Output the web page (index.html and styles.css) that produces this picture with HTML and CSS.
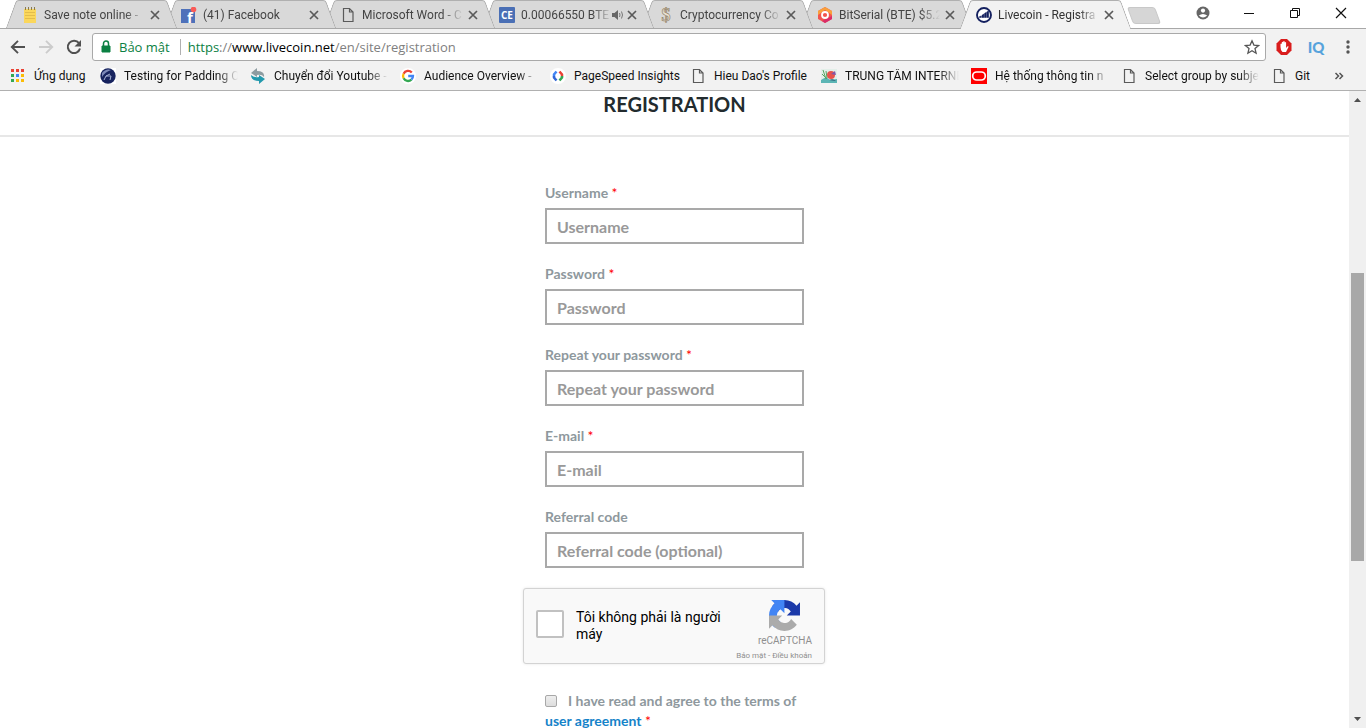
FILE: index.html
```html
<!DOCTYPE html>
<html lang="vi">
<head>
<meta charset="utf-8">
<title>Livecoin - Registration</title>
<link rel="stylesheet" href="styles.css">
</head>
<body>
<svg class="sprite" aria-hidden="true">
  <symbol id="close" viewBox="0 0 16 16"><path d="M4 4l8 8M12 4l-8 8" stroke="#5a5a5a" stroke-width="1.7" fill="none"/></symbol>
  <symbol id="page" viewBox="0 0 16 16"><path d="M3.5 1.5h6l3.500 3.500v9.500h-9.500zM9.500 1.500v3.500h3.500" stroke="#5a5a5a" stroke-width="1.200" fill="none"/></symbol>
</svg>

<header class="browser">
  <div class="titlebar">
    <nav class="tabs" aria-label="Tabs">
      <div class="tab tab-1">
        <svg class="icon" viewBox="0 0 16 16"><path d="M2 2h12v14H2z" fill="#fbd75b"/><path d="M3.500 0v3M6.500 0v3M9.500 0v3M12.500 0v3" stroke="#8a7b4c"/><path d="M3 5.500h10M3 8.500h10M3 11.500h10" stroke="#e3bd4c"/></svg>
        <span class="tab-title">Save note online -</span>
        <button class="tab-close" aria-label="Close"><svg class="icon"><use href="#close"/></svg></button>
      </div>
      <div class="tab tab-2">
        <svg class="icon" viewBox="0 0 16 16"><path d="M0 2h14v14H0z" fill="#4e71ba"/><text x="6" y="16" class="glyph-f">f</text><circle cx="12.500" cy="2.500" r="2.800" fill="#fa5b57"/></svg>
        <span class="tab-title">(41) Facebook</span>
        <button class="tab-close" aria-label="Close"><svg class="icon"><use href="#close"/></svg></button>
      </div>
      <div class="tab tab-3">
        <svg class="icon"><use href="#page"/></svg>
        <span class="tab-title">Microsoft Word - C</span>
        <button class="tab-close" aria-label="Close"><svg class="icon"><use href="#close"/></svg></button>
      </div>
      <div class="tab tab-4">
        <svg class="icon" viewBox="0 0 16 16"><rect width="16" height="16" rx="1" fill="#4a6fb5"/><text x="8" y="12" class="glyph-ce">CE</text></svg>
        <span class="tab-title tab-title-tight">0.00066550 BTE</span>
        <svg class="audio" viewBox="0 0 12 12"><path d="M0 4h2.500L6 1v10L2.500 8H0z" fill="#666"/><path d="M7.500 4q1 2 0 4M9.500 2.500q2 3.500 0 7" stroke="#777" fill="none"/></svg>
        <button class="tab-close" aria-label="Close"><svg class="icon"><use href="#close"/></svg></button>
      </div>
      <div class="tab tab-5">
        <svg class="icon" viewBox="0 0 16 16"><text x="8" y="14" class="glyph-dollar">$</text></svg>
        <span class="tab-title">Cryptocurrency Co</span>
        <button class="tab-close" aria-label="Close"><svg class="icon"><use href="#close"/></svg></button>
      </div>
      <div class="tab tab-6">
        <svg class="icon" viewBox="0 0 16 16"><path d="M8 0l7 4v8l-7 4-7-4V4z" fill="#f2554f"/><path d="M8 0l7 4v4L8 3 1 8V4z" fill="#f9a03c"/><path d="M15 9v3l-7 4-3-2z" fill="#d92d6b"/><circle cx="8" cy="8" r="3" fill="none" stroke="#fff" stroke-width="1.800"/></svg>
        <span class="tab-title">BitSerial (BTE) $5.2</span>
        <button class="tab-close" aria-label="Close"><svg class="icon"><use href="#close"/></svg></button>
      </div>
      <div class="tab tab-7 tab-active">
        <svg class="icon" viewBox="0 0 16 16"><circle cx="8" cy="8" r="7" fill="#fff" stroke="#14205f" stroke-width="1.900"/><path d="M3.500 10.500h1.800v-1.500l-1.800.6zM6 10.500h1.900V7L6 8.200zM8.500 10.500h1.900V5.200L8.500 6.400zM11 10.500h1.700V4L11 4.800z" fill="#14205f" stroke="#14205f" stroke-width=".5"/></svg>
        <span class="tab-title">Livecoin - Registra</span>
        <button class="tab-close" aria-label="Close"><svg class="icon"><use href="#close"/></svg></button>
      </div>
      <button class="new-tab" aria-label="New tab"></button>
    </nav>
    <div class="window-controls">
      <button aria-label="Profile"><svg class="icon" viewBox="0 0 16 16"><circle cx="8" cy="8" r="6.500" fill="#666"/><circle cx="8" cy="5.600" r="2.100" fill="#fff"/><path d="M3.800 10.600q4.200-3 8.400 0Q8 14.500 3.800 10.600z" fill="#fff"/></svg></button>
      <button aria-label="Minimize"><svg class="icon" viewBox="0 0 16 16"><path d="M3 8.500h10" stroke="#111"/></svg></button>
      <button aria-label="Restore"><svg class="icon" viewBox="0 0 16 16"><path d="M3.500 5.500h7v7h-7zM5.500 5V3.500h7v7H11" stroke="#111" fill="none"/></svg></button>
      <button aria-label="Close window"><svg class="icon" viewBox="0 0 16 16"><path d="M3 3l10 10M13 3L3 13" stroke="#111" stroke-width="1.200"/></svg></button>
    </div>
  </div>

  <div class="toolbar">
    <button class="tool" aria-label="Back"><svg class="icon" viewBox="0 0 16 16"><path d="M15 8H2M8 1.800L1.800 8 8 14.200" stroke="#505050" stroke-width="1.900" fill="none"/></svg></button>
    <button class="tool" aria-label="Forward"><svg class="icon" viewBox="0 0 16 16"><path d="M1 8h13M8 1.800L14.200 8 8 14.200" stroke="#ccc" stroke-width="1.900" fill="none"/></svg></button>
    <button class="tool" aria-label="Reload"><svg class="icon" viewBox="0 0 16 16"><path d="M13 4.200A6.200 6.200 0 1 0 14 9.500" stroke="#505050" stroke-width="2" fill="none"/><path d="M15 1v6.500H8.500z" fill="#505050"/></svg></button>
    <div class="omnibox">
      <svg class="lock" viewBox="0 0 10 14"><path d="M1 6h8v6H1z" fill="#0b8043" stroke="#0b8043"/><path d="M2.500 6V3.500a2.500 2.500 0 0 1 5 0V6" stroke="#0b8043" stroke-width="1.500" fill="none"/></svg>
      <span class="secure">Bảo mật</span>
      <div class="url" role="textbox" aria-label="Address" contenteditable="true" spellcheck="false"><span class="scheme">https</span>://<span class="host">www.livecoin.net</span>/en/site/registration</div>
      <button class="star" aria-label="Bookmark this page"><svg class="icon" viewBox="0 0 16 16"><path d="M8 1.800l1.900 4.300 4.700.4-3.600 3.100 1.100 4.600L8 11.700l-4.100 2.500L5 9.600 1.400 6.500l4.700-.4z" stroke="#555" stroke-width="1.300" fill="none"/></svg></button>
    </div>
    <div class="extensions">
      <button class="tool" aria-label="Blocker"><svg class="icon" viewBox="0 0 16 16"><path d="M5 0h6l4.500 4.500v7L11 16H5L.5 11.500v-7z" fill="#d91d1d"/><path d="M4.500 8V5q.7-1 1.300 0V3.200q.7-1 1.400 0v-.7q.8-1 1.500 0v1q.8-.8 1.400 0V9l1.500-1.700q1.200-.4.900.7L10 13H6.500q-2-1.500-2-5z" fill="#fff"/></svg></button>
      <button class="tool tool-iq">IQ</button>
      <button class="tool" aria-label="Menu"><svg class="icon" viewBox="0 0 16 16"><g fill="#555"><circle cx="8" cy="3" r="1.700"/><circle cx="8" cy="8" r="1.700"/><circle cx="8" cy="13" r="1.700"/></g></svg></button>
    </div>
  </div>

  <nav class="bookmarks" aria-label="Bookmarks">
    <a href="#" class="bookmark"><svg class="icon" viewBox="0 0 16 16"><g fill="#ea4335"><path d="M1 1h3v3H1zM6 1h3v3H6zM11 1h3v3h-3z"/></g><path d="M1 6h3v3H1zM1 11h3v3H1z" fill="#34a853"/><path d="M6 6h3v3H6z" fill="#4285f4"/><path d="M11 6h3v3h-3zM6 11h3v3H6zM11 11h3v3h-3z" fill="#fbbc05"/></svg><span>Ứng dụng</span></a>
    <a href="#" class="bookmark long"><svg class="icon" viewBox="0 0 16 16"><path d="M0 0h16v16H0z" fill="#fff"/><circle cx="8" cy="8" r="7.700" fill="#17235e"/><path d="M2 5q4-5 9-3Q5 4 2 9z" fill="#7d89b8"/><path d="M4 12l2-4h5l-1 4M6 8l4-2" fill="none" stroke="#a9b4d6"/></svg><span>Testing for Padding O</span></a>
    <a href="#" class="bookmark long"><svg class="icon" viewBox="0 0 16 16"><path d="M7 0L1 5l6 4V7q5-1 7 2 1-6-7-6z" fill="#8d9ca1"/><path d="M9 16l6-5-6-4v2q-5 1-8-2 0 6 8 6z" fill="#2399ad"/></svg><span>Chuyển đổi Youtube -</span></a>
    <a href="#" class="bookmark long"><svg class="icon" viewBox="0 0 16 16"><circle cx="8" cy="8" r="8" fill="#fff"/><g fill="none" stroke-width="2.300"><path d="M11.800 4.500A5 5 0 0 0 3.600 5.700" stroke="#ea4335"/><path d="M3.600 5.700a5 5 0 0 0 0 4.600" stroke="#fbbc05"/><path d="M3.600 10.300a5 5 0 0 0 7.800 1.400" stroke="#34a853"/><path d="M11.400 11.700A5 5 0 0 0 13 8H8.200" stroke="#4285f4"/></g></svg><span>Audience Overview -</span></a>
    <a href="#" class="bookmark"><svg class="icon" viewBox="0 0 16 16"><circle cx="8" cy="8" r="8" fill="#fff"/><g fill="none" stroke-width="2.500"><path d="M6.500 3.500L4 6.500v2" stroke="#4285f4"/><path d="M4 8v1.500l2.500 3" stroke="#3367d6"/><path d="M9.500 3.500L12 6.500v2" stroke="#ea4335"/><path d="M12 8v1.500l-2.500 3" stroke="#34a853"/></g></svg><span>PageSpeed Insights</span></a>
    <a href="#" class="bookmark"><svg class="icon"><use href="#page"/></svg><span>Hieu Dao's Profile</span></a>
    <a href="#" class="bookmark long"><svg class="icon" viewBox="0 0 16 16"><path d="M0 1h16v14H0z" fill="#e3efe9"/><path d="M0 12l5-3 4 3 7-1v4H0z" fill="#5cb5b5"/><path d="M2 2l3 9M5 3l1 7M1 6l5 5" stroke="#57a660"/><circle cx="10" cy="7" r="4" fill="#e8534c"/><path d="M10 6l4-3 1 4z" fill="#8257a8"/><path d="M8 12q4-2 7 1z" fill="#285b75"/></svg><span>TRUNG TÂM INTERNE</span></a>
    <a href="#" class="bookmark long"><svg class="icon" viewBox="0 0 16 16"><path d="M0 0h16v16H0z" fill="red"/><rect x="1.700" y="4" width="12.600" height="8" rx="4" fill="none" stroke="#fff" stroke-width="1.700"/></svg><span>Hệ thống thông tin n</span></a>
    <a href="#" class="bookmark long"><svg class="icon"><use href="#page"/></svg><span>Select group by subje</span></a>
    <a href="#" class="bookmark"><svg class="icon"><use href="#page"/></svg><span>Git</span></a>
    <button class="more" aria-label="More bookmarks"><svg class="icon" viewBox="0 0 16 16"><path d="M4.500 5l3 3-3 3M8.500 5l3 3-3 3" stroke="#555" stroke-width="1.500" fill="none"/></svg></button>
  </nav>
</header>

<div class="viewport">
  <main class="page">
    <h1 class="heading">REGISTRATION</h1>
    <form class="form">
      <div class="field"><label for="username">Username <span class="required">*</span></label><input id="username" type="text" placeholder="Username"></div>
      <div class="field"><label for="password">Password <span class="required">*</span></label><input id="password" type="password" placeholder="Password"></div>
      <div class="field"><label for="repeat">Repeat your password <span class="required">*</span></label><input id="repeat" type="password" placeholder="Repeat your password"></div>
      <div class="field"><label for="email">E-mail <span class="required">*</span></label><input id="email" type="email" placeholder="E-mail"></div>
      <div class="field"><label for="referral">Referral code</label><input id="referral" type="text" placeholder="Referral code (optional)"></div>
      <div class="captcha">
        <input class="captcha-box" id="robot" type="checkbox">
        <label class="captcha-label" for="robot">Tôi không phải là người máy</label>
        <div class="captcha-brand">
          <svg class="captcha-logo" viewBox="0 0 64 64"><path fill="#1c3aa9" d="M64 31.955l-.033-1.370V4.687l-7.160 7.160C50.948 4.674 42.033.093 32.050.093c-10.400 0-19.622 4.960-25.458 12.640l11.736 11.860a15.550 15.550 0 0 1 4.754-5.334c2.050-1.600 4.952-2.906 8.968-2.906.485 0 .860.057 1.135.163 4.976.393 9.288 3.140 11.828 7.124l-8.307 8.307L64 31.953"/><path fill="#4285f4" d="M31.862.094l-1.370.033H4.594l7.160 7.160C4.580 13.147 0 22.060 0 32.046c0 10.400 4.960 19.622 12.640 25.458L24.500 45.768a15.550 15.550 0 0 1-5.334-4.754c-1.600-2.050-2.906-4.952-2.906-8.968 0-.485.057-.860.163-1.135.393-4.976 3.140-9.288 7.124-11.828l8.307 8.307L31.860.095"/><path fill="#ababab" d="M.001 32.045l.033 1.370v25.898l7.160-7.160c5.860 7.173 14.774 11.754 24.760 11.754 10.400 0 19.622-4.960 25.458-12.640l-11.736-11.860a15.550 15.550 0 0 1-4.754 5.334c-2.050 1.600-4.952 2.906-8.968 2.906-.485 0-.860-.057-1.135-.163-4.976-.393-9.288-3.140-11.828-7.124l8.307-8.307c-10.522.040-22.400.066-27.295-.005"/></svg>
          <span class="captcha-name">reCAPTCHA</span>
          <span class="captcha-links"><a href="#">Bảo mật</a> - <a href="#">Điều khoản</a></span>
        </div>
      </div>
      <div class="terms">
        <input id="terms" type="checkbox"><label for="terms">I have read and agree to the terms of</label> <a href="#">user agreement</a> <span class="required">*</span>
      </div>
    </form>
  </main>
  <div class="scrollbar" aria-hidden="true">
    <svg class="arrow" viewBox="0 0 17 17"><path d="M5 11h7L8.500 7z" fill="#505050"/></svg>
    <div class="track"><div class="thumb"></div></div>
    <svg class="arrow" viewBox="0 0 17 17"><path d="M5 6h7l-3.500 4z" fill="#505050"/></svg>
  </div>
</div>
</body>
</html>
```

FILE: styles.css
```css
* { box-sizing: border-box; }
body {
  margin: 0;
  height: 100vh;
  display: flex;
  flex-direction: column;
  overflow: hidden;
  background: #fff;
  font-family: Roboto, "Noto Sans", sans-serif;
  font-size: 12px;
  color: #222;
}
button {
  padding: 0;
  border: 0;
  background: none;
  font: inherit;
  display: flex;
  align-items: center;
  justify-content: center;
}
a { text-decoration: none; color: inherit; }
.sprite { display: none; }
.icon { width: 16px; height: 16px; flex: none; display: block; }

/* Browser frame */
.browser { flex: none; background: #f2f2f2; border-bottom: 1px solid #b0b0b0; }
.titlebar {
  display: flex;
  justify-content: space-between;
  height: 29px;
  background: #fff;
  border-bottom: 1px solid #a8a8a8;
}
.tabs { display: flex; flex: 0 1 1170px; min-width: 0; height: 29px; padding-left: 6px; }
.tab {
  position: relative;
  display: flex;
  align-items: center;
  flex: 0 1 171px;
  min-width: 0;
  height: 28px;
  margin-right: -12px;
  padding: 2px 14px 0 16px;
  color: #444;
  --tab-fill: #d9d9d9;
}
.tab::before, .tab::after {
  content: "";
  position: absolute;
  z-index: -1;
  top: 0;
  bottom: 0;
  background: var(--tab-fill);
  border-top: 1px solid #b0b0b0;
}
.tab::before { left: 5px; right: 35%; border-left: 1px solid #a8a8a8; border-top-left-radius: 3px; transform: skewX(-20deg); }
.tab::after { left: 35%; right: 5px; border-right: 1px solid #a8a8a8; border-top-right-radius: 3px; transform: skewX(20deg); }
.tab-1 { z-index: 7; }
.tab-2 { z-index: 6; }
.tab-3 { z-index: 5; }
.tab-4 { z-index: 4; }
.tab-5 { z-index: 3; }
.tab-6 { z-index: 2; }
.tab-7 { z-index: 8; }
.tab-active { height: 29px; padding-bottom: 1px; color: #333; --tab-fill: #f2f2f2; }
.tab-title {
  flex: 1;
  min-width: 0;
  margin-left: 6px;
  margin-right: 2px;
  overflow: hidden;
  white-space: nowrap;
  -webkit-mask-image: linear-gradient(to left, transparent, #000 20px);
  mask-image: linear-gradient(to left, transparent, #000 20px);
}
.tab-title-tight { margin-right: 0; }
.audio { width: 12px; height: 12px; flex: none; }
.new-tab {
  width: 28px;
  height: 17px;
  margin: 7px 0 0 11px;
  background: #d6d6d6;
  border: 1px solid #c8c8c8;
  border-radius: 3px;
  transform: skewX(20deg);
}
.glyph-f { font: bold 15px "Open Sans", sans-serif; fill: #fff; }
.glyph-ce { font: bold 10px "Open Sans", sans-serif; fill: #fff; text-anchor: middle; }
.glyph-dollar { font: bold 18px "Liberation Serif", serif; fill: #e9e1d2; stroke: #95866c; stroke-width: .7px; text-anchor: middle; }
.window-controls { display: flex; flex: none; padding-right: 2px; }
.window-controls button { width: 46px; height: 26px; }

/* Address row */
.toolbar { display: flex; align-items: center; height: 36px; padding-left: 4px; }
.tool { width: 28px; height: 28px; flex: none; }
.omnibox {
  flex: 1;
  display: flex;
  align-items: center;
  height: 28px;
  margin-left: 4px;
  padding: 0 5px 0 8px;
  background: #fff;
  border: 1px solid #a9a9a9;
  border-radius: 3px;
  font-family: "Open Sans", "Noto Sans", sans-serif;
  font-size: 13px;
  color: #808080;
}
.lock { width: 10px; height: 14px; }
.secure { margin-left: 8px; padding-right: 10px; border-right: 1px solid #b0b0b0; line-height: 16px; color: #0b8043; }
.url { flex: 1; margin-left: 7px; outline: 0; white-space: nowrap; }
.scheme { color: #0b8043; }
.host { color: #000; }
.extensions { display: flex; gap: 4px; padding: 0 4px; }
.tool-iq { font: 900 15px Lato, sans-serif; color: #57a3dc; }

/* Bookmarks row */
.bookmarks {
  display: grid;
  grid-template-columns: 90px 150px 150px 150px 140px 131px 150px 150px 150px 50px 1fr;
  align-items: center;
  height: 25px;
  padding: 0 10px 4px 10px;
  color: #111;
}
.bookmark { display: flex; align-items: center; min-width: 0; padding-right: 12px; }
.bookmark span { flex: 1; margin-left: 8px; white-space: nowrap; }
.long span {
  overflow: hidden;
  -webkit-mask-image: linear-gradient(to left, transparent, #000 20px);
  mask-image: linear-gradient(to left, transparent, #000 20px);
}

/* Page */
.viewport { flex: 1; display: flex; min-height: 0; }
.page { flex: 1; min-width: 0; overflow: hidden; font-family: Lato, sans-serif; font-weight: 700; }
.heading {
  margin: 0;
  padding: 1px 0 19px;
  border-bottom: 2px solid #e7e7e7;
  text-align: center;
  font-size: 20px;
  line-height: 24px;
  color: #222b2e;
}
.form { width: 259px; margin: 46px auto 0; color: #8e989d; font-size: 14px; line-height: 20px; }
.field { display: flex; flex-direction: column; gap: 5px; margin-bottom: 20px; }
.required { color: #f00; font-weight: 400; }
.field input {
  width: 100%;
  height: 36px;
  padding: 0 10px;
  border: 2px solid #a9a9a9;
  font: 700 16px Lato, sans-serif;
  color: #555;
}
.field input::placeholder { color: #999; opacity: 1; }
.captcha {
  display: flex;
  width: 302px;
  height: 76px;
  margin: 0 -22px 27px;
  padding: 0 12px;
  background: #f9f9f9;
  border: 1px solid #d3d3d3;
  border-radius: 3px;
  box-shadow: 0 0 3px rgba(0, 0, 0, .1);
  font-family: Roboto, sans-serif;
  font-weight: 400;
}
.captcha-box {
  appearance: none;
  width: 28px;
  height: 28px;
  margin: 0 0 4px;
  align-self: center;
  background: #fff;
  border: 2px solid #c1c1c1;
  border-radius: 2px;
}
.captcha-label { flex: 1; align-self: center; margin-left: 12px; font-size: 14px; line-height: 17px; color: #000; }
.captcha-brand { display: flex; flex-direction: column; align-items: flex-end; padding-top: 11px; color: #8f8f8f; }
.captcha-logo { width: 31px; height: 31px; margin-right: 12px; }
.captcha-name { font-size: 10px; line-height: 20px; }
.captcha-links { font-size: 8px; line-height: 10px; white-space: nowrap; }
.terms input {
  appearance: none;
  width: 12px;
  height: 12px;
  margin: 0 11px 0 0;
  vertical-align: -1px;
  background: linear-gradient(#eee, #ddd);
  border: 1px solid #a8a8a8;
  border-radius: 2px;
}
.terms a { color: #1583c9; }

/* Scrollbar */
.scrollbar { flex: none; width: 17px; display: flex; flex-direction: column; background: #f0f0f0; }
.arrow { width: 17px; height: 17px; flex: none; }
.track { flex: 1; padding: 0 2px; display: flex; flex-direction: column; }
.track::before { content: ""; flex: 165; }
.track::after { content: ""; flex: 150; }
.thumb { flex: 288; background: #a8a8a8; }
```
